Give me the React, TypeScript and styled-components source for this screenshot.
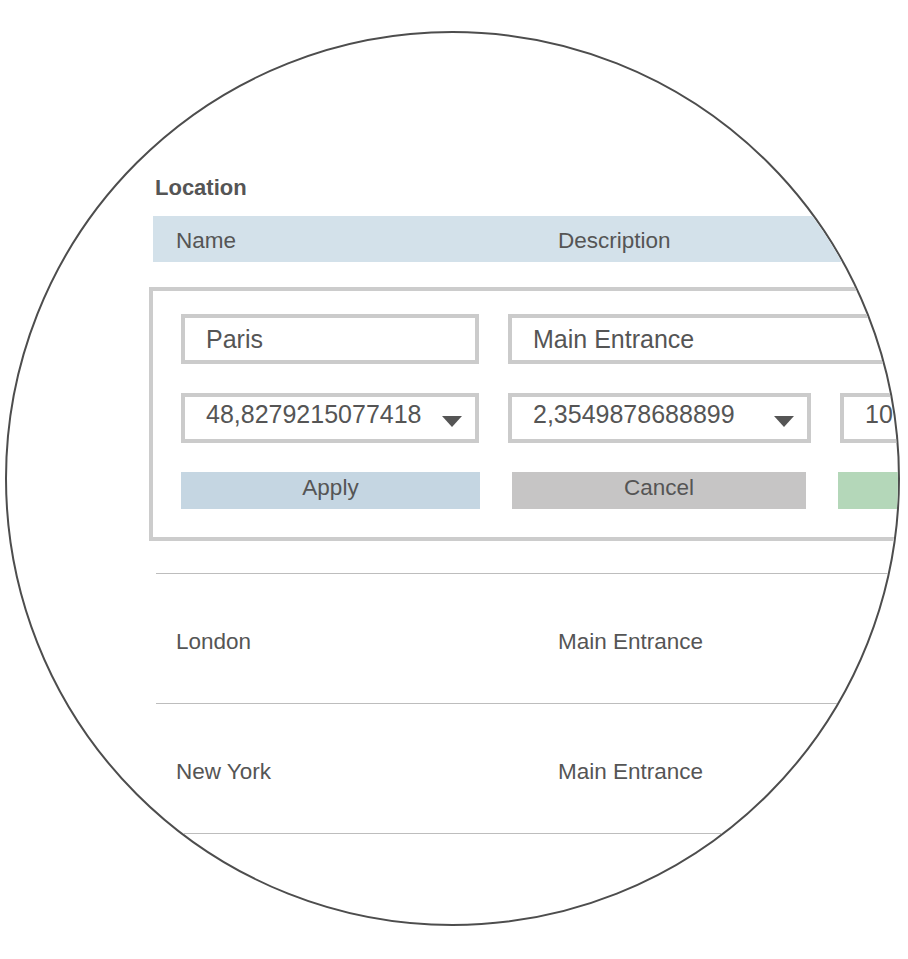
import React from "react";
import styled, { createGlobalStyle } from "styled-components";

type Place = {
  name: string;
  description: string;
};

const places: Place[] = [
  { name: "London", description: "Main Entrance" },
  { name: "New York", description: "Main Entrance" },
];

function DropArrow() {
  return (
    <svg width="20" height="11" viewBox="0 0 20 11">
      <polygon points="0,0 20,0 10,11" fill="#555" />
    </svg>
  );
}

export default function App(): JSX.Element {
  return (
    <>
      <GlobalStyle />
      <Stage>
        <Lens>
          <Sheet>
            <Title>Location</Title>
            <HeaderBar>
              <HeaderCell>Name</HeaderCell>
              <HeaderCell>Description</HeaderCell>
            </HeaderBar>

            <EditPanel>
              <FieldGrid>
                <Field>Paris</Field>
                <Field $wide>Main Entrance</Field>
                <Field>
                  <SelectValue>48,8279215077418</SelectValue>
                  <ArrowSlot>
                    <DropArrow />
                  </ArrowSlot>
                </Field>
                <Field>
                  <SelectValue>2,3549878688899</SelectValue>
                  <ArrowSlot>
                    <DropArrow />
                  </ArrowSlot>
                </Field>
                <Field>
                  <SelectValue>10</SelectValue>
                </Field>
              </FieldGrid>
              <ButtonBar>
                <ActionButton $tone="#c5d6e2">Apply</ActionButton>
                <ActionButton $tone="#c6c5c5">Cancel</ActionButton>
                {/* third button sits mostly outside the lens, its label is not in view */}
                <ActionButton $tone="#b4d7b9" />
              </ButtonBar>
            </EditPanel>

            <RowList>
              {places.map((p) => (
                <Row key={p.name}>
                  <RowCell>{p.name}</RowCell>
                  <RowCell>{p.description}</RowCell>
                </Row>
              ))}
            </RowList>
          </Sheet>
        </Lens>
      </Stage>
    </>
  );
}

const GlobalStyle = createGlobalStyle`
  html, body {
    margin: 0;
    padding: 0;
    background: #ffffff;
  }
  body {
    font-family: "Liberation Sans", Arial, sans-serif;
    color: #555555;
  }
  * {
    box-sizing: border-box;
  }
`;

const Stage = styled.div({
  width: "908px",
  height: "959px",
  padding: "31px 0 0 5px",
  overflow: "hidden",
});

const Lens = styled.div({
  width: "895px",
  height: "895px",
  borderRadius: "50%",
  border: "2px solid #4d4d4d",
  overflow: "hidden",
});

const Sheet = styled.div({
  width: "1100px",
  paddingTop: "142px",
  paddingLeft: "146px",
});

const Title = styled.div({
  fontSize: "22px",
  fontWeight: "bold",
  lineHeight: "26px",
  paddingLeft: "2px",
  color: "#555",
});

const HeaderBar = styled.div({
  marginTop: "15px",
  height: "46px",
  width: "900px",
  background: "#d3e1ea",
  display: "grid",
  gridTemplateColumns: "382px 1fr",
  alignItems: "center",
  paddingLeft: "23px",
  paddingTop: "3px",
});

const HeaderCell = styled.div({
  fontSize: "22.5px",
  lineHeight: "26px",
});

const EditPanel = styled.div({
  marginTop: "25px",
  marginLeft: "-4px",
  width: "900px",
  border: "4px solid #cccccc",
  padding: "23px 0 28px 28px",
  display: "flex",
  flexDirection: "column",
  gap: "29px",
});

const FieldGrid = styled.div({
  display: "grid",
  gridTemplateColumns: "298px 303px 300px",
  columnGap: "29px",
  rowGap: "29px",
});

const Field = styled.div<{ $wide?: boolean }>`
  height: 50px;
  border: 4px solid #cbcbcb;
  display: flex;
  align-items: center;
  padding: 0 13px 0 21px;
  font-size: 25px;
  color: #555;
  grid-column: ${(p) => (p.$wide ? "2 / -1" : "auto")};
`;

const SelectValue = styled.span({
  flex: 1,
  paddingBottom: "8px",
  whiteSpace: "nowrap",
});

const ArrowSlot = styled.span({
  display: "flex",
  marginTop: "7px",
});

const ButtonBar = styled.div({
  display: "grid",
  gridTemplateColumns: "299px 294px 300px",
  columnGap: "32px",
});

const ActionButton = styled.div<{ $tone: string }>`
  height: 37px;
  background: ${(p) => p.$tone};
  display: flex;
  align-items: center;
  justify-content: center;
  padding-bottom: 5px;
  font-size: 22.5px;
  color: #555;
`;

const RowList = styled.div({
  marginTop: "32px",
  marginLeft: "3px",
  width: "900px",
  borderBottom: "1px solid #bdbdbd",
});

const Row = styled.div({
  height: "130px",
  borderTop: "1px solid #bdbdbd",
  display: "grid",
  gridTemplateColumns: "382px 1fr",
  alignItems: "center",
  paddingLeft: "20px",
  paddingTop: "6px",
});

const RowCell = styled.div({
  fontSize: "22.5px",
  lineHeight: "26px",
});
